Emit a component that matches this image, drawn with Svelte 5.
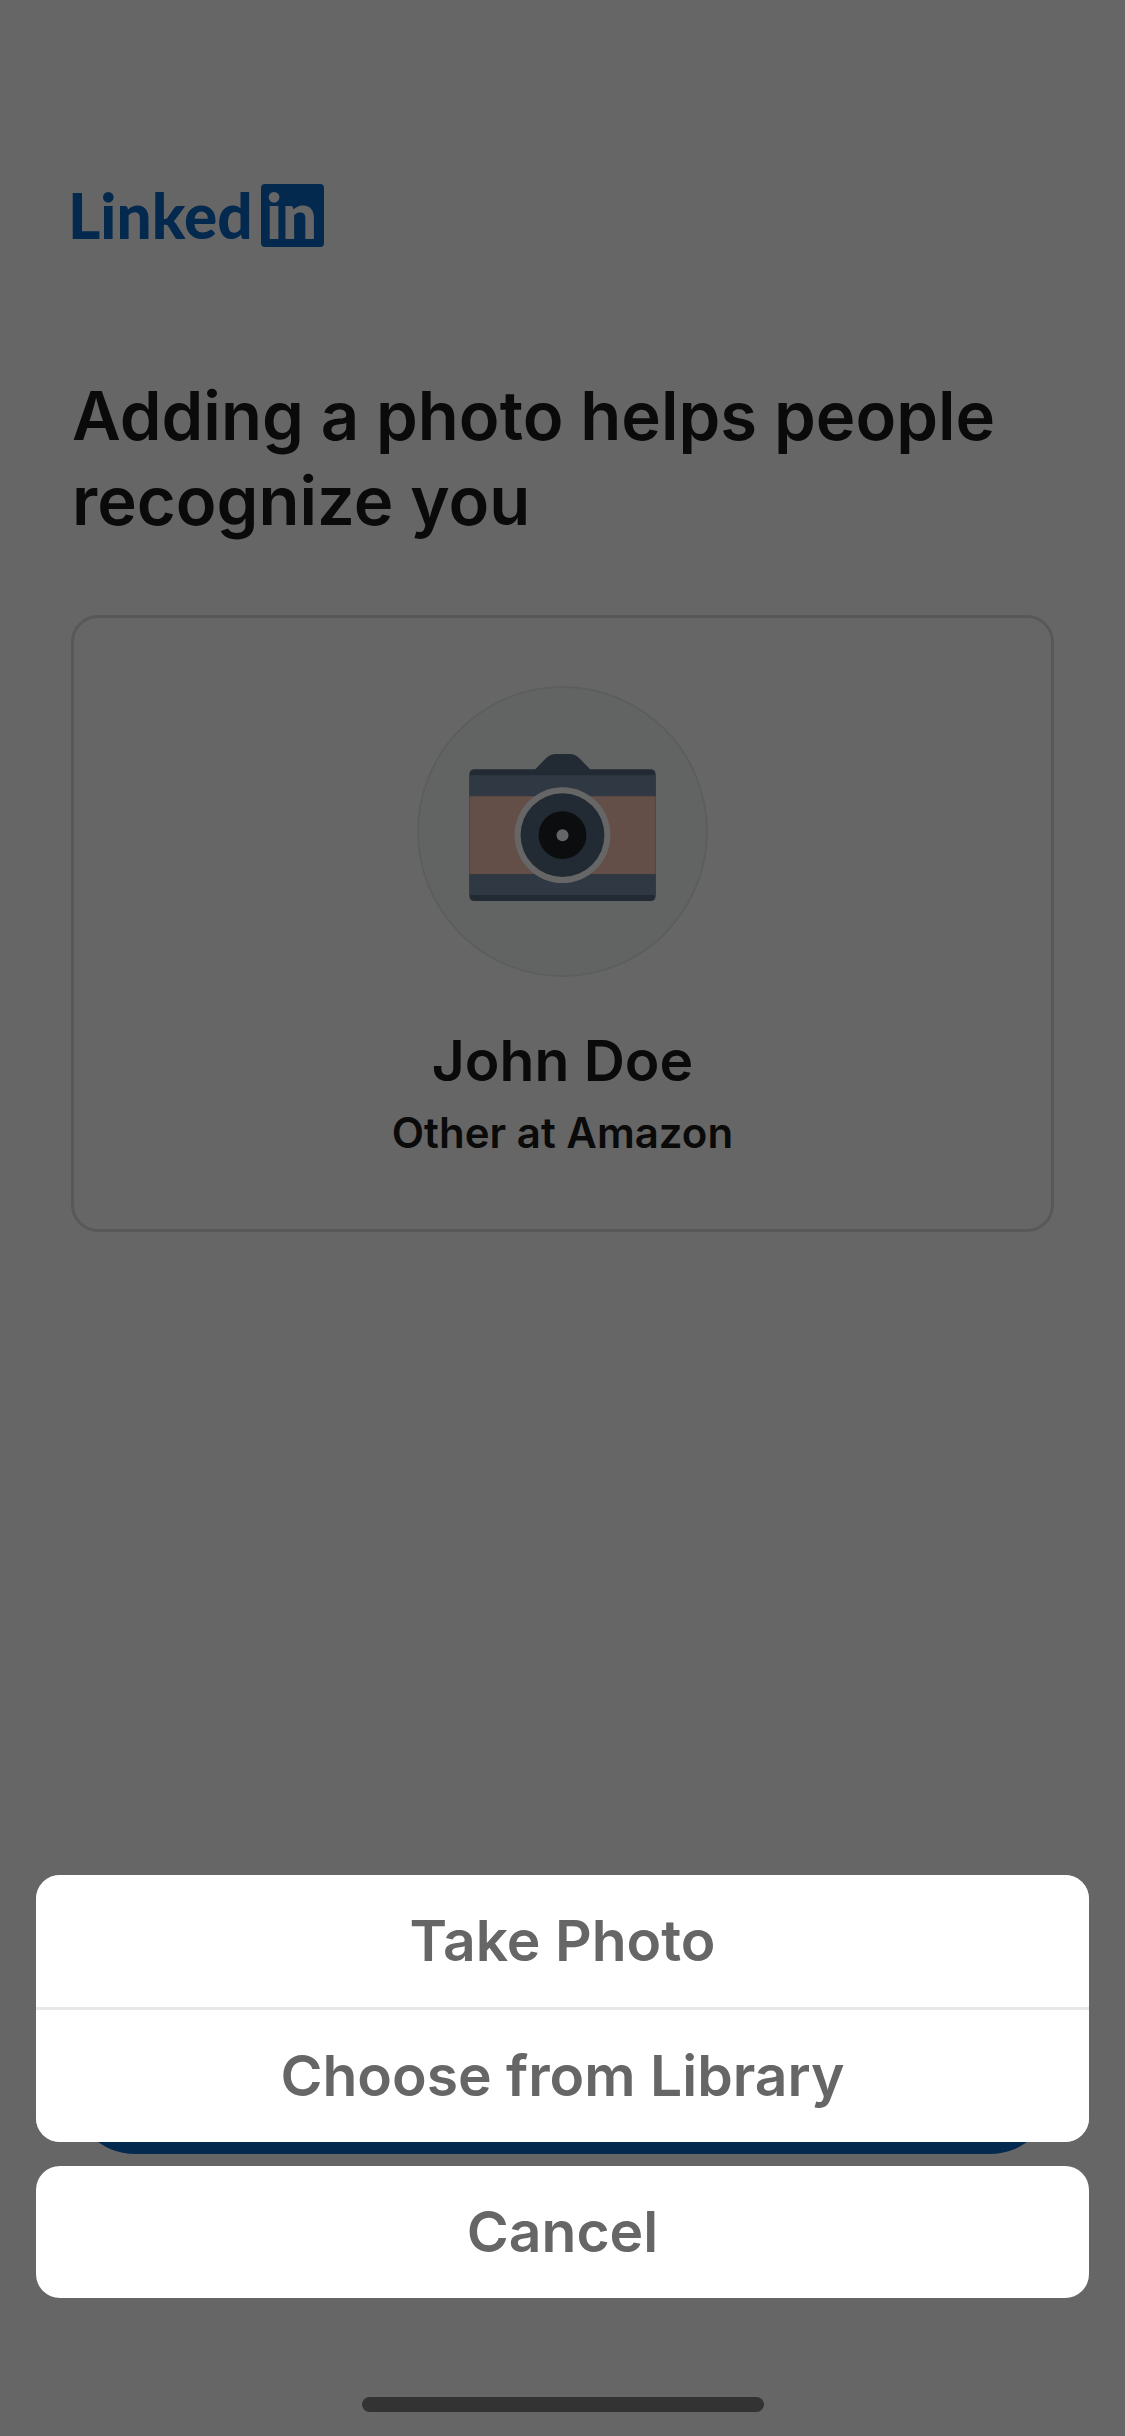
<script lang="ts">
  /**
   * Add photo step of the sign-up flow, with the photo source
   * action sheet open on top of the dimmed page.
   */

  const person = { name: "John Doe", headline: "Other at Amazon" };

  const ACTIONS = [
    { id: "camera",  label: "Take Photo" },
    { id: "library", label: "Choose from Library" },
  ] as const;

  let sheetOpen = $state(true);
  let source    = $state<string | null>(null);

  function pick(id: string) {
    source    = id;
    sheetOpen = false;
  }
</script>

<div class="screen">
  <main class="page">
    <svg class="logo" viewBox="0 0 252 63" role="img" aria-label="LinkedIn">
      <text x="-4" y="55" font-size="62">Linked</text>
      <rect x="189" width="63" height="63" rx="4" />
      <text class="logo-in" x="194" y="55" font-size="62">in</text>
    </svg>

    <h1>Adding a photo helps people recognize you</h1>

    <section class="card">
      <div class="avatar">
        <svg class="camera" viewBox="0 0 560 442" aria-hidden="true">
          <path fill="#566a80" d="M198 46 L230 13 Q243 0 260 0 H301 Q318 0 331 13 L363 46 H544 Q560 46 560 62 V426 Q560 442 544 442 H16 Q0 442 0 426 V62 Q0 46 16 46 Z" />
          <rect fill="#788ca8" y="64" width="560" height="360" />
          <rect fill="#fac3b4" y="127" width="560" height="234" />
          <circle fill="#fff" cx="280" cy="244" r="144" />
          <circle fill="#566a80" cx="280" cy="244" r="126" />
          <circle fill="#1d2226" cx="280" cy="244" r="72" />
          <circle fill="#fff" cx="280" cy="244" r="18" />
        </svg>
      </div>
      <h2>{person.name}</h2>
      <p>{person.headline}</p>
    </section>

    <button class="add-photo" onclick={() => (sheetOpen = true)} aria-label="Add photo"></button>
  </main>

  {#if sheetOpen}
    <div class="scrim">
      <div class="sheet" role="dialog" aria-label="Photo source">
        <div class="group">
          {#each ACTIONS as action (action.id)}
            <button class="action" onclick={() => pick(action.id)}>{action.label}</button>
          {/each}
        </div>
        <button class="action cancel" onclick={() => (sheetOpen = false)}>Cancel</button>
      </div>
    </div>
  {/if}

  <div class="home-indicator"></div>
</div>

<style>
  :global(body) {
    margin: 0;
    background: #fff;
  }

  .screen {
    position: relative;
    min-height: 100vh;
    display: flex;
    font-family: Inter, "Liberation Sans", sans-serif;
    color: #191919;
  }

  .page {
    flex: 1;
    display: flex;
    flex-direction: column;
    box-sizing: border-box;
    padding: 184px 72px 282px;
  }

  .logo {
    width: 252px;
    height: 63px;
    overflow: visible;
    fill: #0a66c2;
    font-family: Lato, sans-serif;
    font-weight: 900;
  }

  .logo-in {
    fill: #fff;
  }

  h1 {
    margin: 126px 0 72px;
    font-size: 67px;
    line-height: 85px;
    font-weight: 600;
  }

  .card {
    display: flex;
    flex-direction: column;
    align-items: center;
    margin: 0 -1px;
    padding: 68px 24px;
    border: 3px solid #dcdcdc;
    border-radius: 27px;
  }

  .avatar {
    display: flex;
    align-items: center;
    justify-content: center;
    box-sizing: border-box;
    width: 291px;
    height: 291px;
    padding-bottom: 8px;
    border: 2px solid #e6e9e8;
    border-radius: 50%;
    background: #f6fbf9;
  }

  .camera {
    width: 187px;
    height: 147px;
  }

  h2 {
    margin: 48px 0 0;
    font-size: 57px;
    line-height: 72px;
    font-weight: 600;
  }

  p {
    margin: 8px 0 0;
    font-size: 42px;
    line-height: 56px;
    font-weight: 600;
  }

  .add-photo {
    height: 126px;
    margin-top: auto;
    border: none;
    border-radius: 63px;
    background: #0a66c2;
  }

  .scrim {
    position: absolute;
    inset: 0;
    display: flex;
    flex-direction: column;
    justify-content: flex-end;
    background: rgba(0, 0, 0, 0.6);
  }

  .sheet {
    display: flex;
    flex-direction: column;
    gap: 24px;
    padding: 0 36px 138px;
  }

  .group {
    display: flex;
    flex-direction: column;
    gap: 3px;
    border-radius: 24px;
    background: #e8e8e8;
    overflow: hidden;
  }

  .action {
    height: 132px;
    padding: 0 24px 2px;
    border: none;
    background: #fff;
    color: #666;
    font-family: inherit;
    font-size: 57px;
    font-weight: 600;
    cursor: pointer;
  }

  .cancel {
    border-radius: 24px;
  }

  .home-indicator {
    position: absolute;
    bottom: 24px;
    left: 50%;
    width: 402px;
    height: 15px;
    border-radius: 8px;
    background: #333;
    transform: translateX(-50%);
  }
</style>
